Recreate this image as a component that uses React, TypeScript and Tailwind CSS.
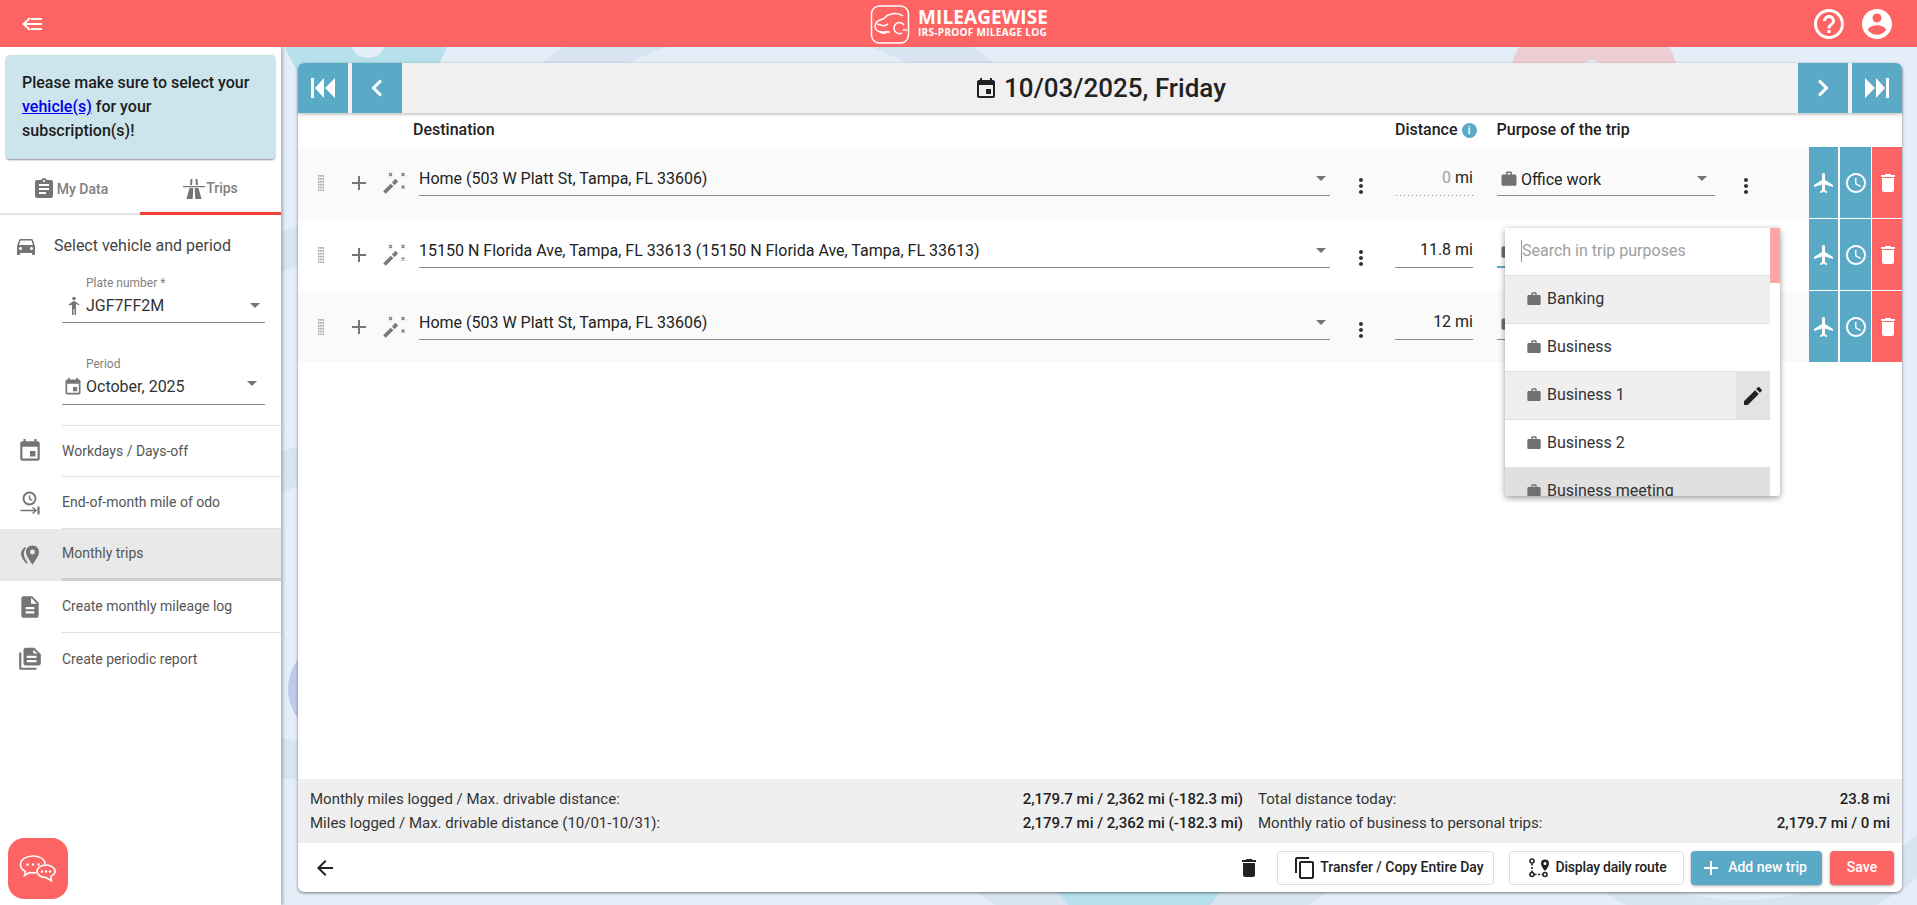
import React from "react";

type IconProps = { d: string; size?: number; className?: string };
const Icon = ({ d, size = 24, className = "" }: IconProps) => (
  <svg width={size} height={size} viewBox="0 0 24 24" fill="currentColor" className={`shrink-0 ${className}`}>
    <path d={d} />
  </svg>
);

const P = {
  event: "M17 12h-5v5h5v-5zM16 1v2H8V1H6v2H5c-1.11 0-1.99.9-1.99 2L3 19c0 1.1.89 2 2 2h14c1.1 0 2-.9 2-2V5c0-1.1-.9-2-2-2h-1V1h-2zm3 18H5V8h14v11z",
  work: "M20 6h-4V4c0-1.11-.89-2-2-2h-4c-1.11 0-2 .89-2 2v2H4c-1.11 0-1.99.89-1.99 2L2 19c0 1.11.89 2 2 2h16c1.11 0 2-.89 2-2V8c0-1.11-.89-2-2-2zm-6 0h-4V4h4v2z",
  assignment: "M19 3h-4.18C14.4 1.84 13.3 1 12 1c-1.3 0-2.4.84-2.82 2H5c-1.1 0-2 .9-2 2v14c0 1.1.9 2 2 2h14c1.1 0 2-.9 2-2V5c0-1.1-.9-2-2-2zm-7 0c.55 0 1 .45 1 1s-.45 1-1 1-1-.45-1-1 .45-1 1-1zm2 14H7v-2h7v2zm3-4H7v-2h10v2zm0-4H7V7h10v2z",
  car: "M18.92 6.01C18.72 5.42 18.16 5 17.5 5h-11c-.66 0-1.21.42-1.42 1.01L3 12v8c0 .55.45 1 1 1h1c.55 0 1-.45 1-1v-1h12v1c0 .55.45 1 1 1h1c.55 0 1-.45 1-1v-8l-2.08-5.99zM6.5 16c-.83 0-1.5-.67-1.5-1.5S5.67 13 6.5 13s1.5.67 1.5 1.5S7.33 16 6.5 16zm11 0c-.83 0-1.5-.67-1.5-1.5s.67-1.5 1.5-1.5 1.5.67 1.5 1.5-.67 1.5-1.5 1.5zM5 11l1.5-4.5h11L19 11H5z",
  add: "M19 13h-6v6h-2v-6H5v-2h6V5h2v6h6v2z",
  more: "M12 8c1.1 0 2-.9 2-2s-.9-2-2-2-2 .9-2 2 .9 2 2 2zm0 2c-1.1 0-2 .9-2 2s.9 2 2 2 2-.9 2-2-.9-2-2-2zm0 6c-1.1 0-2 .9-2 2s.9 2 2 2 2-.9 2-2-.9-2-2-2z",
  flight: "M21 16v-2l-8-5V3.5c0-.83-.67-1.5-1.5-1.5S10 2.67 10 3.5V9l-8 5v2l8-2.5V19l-2 1.5V22l3.5-1 3.5 1v-1.5L13 19v-5.5l8 2.5z",
  time: "M11.99 2C6.47 2 2 6.48 2 12s4.47 10 9.99 10C17.52 22 22 17.52 22 12S17.52 2 11.99 2zM12 20c-4.42 0-8-3.58-8-8s3.58-8 8-8 8 3.58 8 8-3.58 8-8 8zm.5-13H11v6l5.25 3.15.75-1.23-4.5-2.67z",
  del: "M6 19c0 1.1.9 2 2 2h8c1.1 0 2-.9 2-2V7H6v12zM19 4h-3.5l-1-1h-5l-1 1H5v2h14V4z",
  edit: "M3 17.25V21h3.75L17.81 9.94l-3.75-3.75L3 17.25zM20.71 7.04c.39-.39.39-1.02 0-1.41l-2.34-2.34c-.39-.39-1.02-.39-1.41 0l-1.83 1.83 3.75 3.75 1.83-1.83z",
  back: "M20 11H7.83l5.59-5.59L12 4l-8 8 8 8 1.41-1.41L7.83 13H20v-2z",
  copy: "M16 1H4c-1.1 0-2 .9-2 2v14h2V3h12V1zm3 4H8c-1.1 0-2 .9-2 2v14c0 1.1.9 2 2 2h11c1.1 0 2-.9 2-2V7c0-1.1-.9-2-2-2zm0 16H8V7h11v14z",
  doc: "M14 2H6c-1.1 0-1.99.9-1.99 2L4 20c0 1.1.89 2 1.99 2H18c1.1 0 2-.9 2-2V8l-6-6zm2 16H8v-2h8v2zm0-4H8v-2h8v2zm-3-5V3.5L18.5 9H13z",
  account: "M12 2C6.48 2 2 6.48 2 12s4.48 10 10 10 10-4.48 10-10S17.52 2 12 2zm0 3c1.66 0 3 1.34 3 3s-1.34 3-3 3-3-1.34-3-3 1.34-3 3-3zm0 14.2c-2.5 0-4.71-1.28-6-3.22.03-1.99 4-3.08 6-3.08 1.99 0 5.97 1.09 6 3.08-1.29 1.94-3.5 3.22-6 3.22z",
  help: "M11 18h2v-2h-2v2zm1-16C6.48 2 2 6.48 2 12s4.48 10 10 10 10-4.48 10-10S17.52 2 12 2zm0 18c-4.41 0-8-3.59-8-8s3.59-8 8-8 8 3.59 8 8-3.59 8-8 8zm0-14c-2.21 0-4 1.79-4 4h2c0-1.1.9-2 2-2s2 .9 2 2c0 2-3 1.75-3 5h2c0-2.25 3-2.5 3-5 0-2.21-1.79-4-4-4z",
};

const Caret = () => (
  <svg width="10" height="5" viewBox="0 0 10 5" className="shrink-0 text-[#757575]" fill="currentColor">
    <path d="M0 0h10L5 5z" />
  </svg>
);

const Wand = () => (
  <svg width="24" height="24" viewBox="0 0 24 24" className="text-[#7a7a7a]" fill="none" stroke="currentColor">
    <path d="M2.500 21.500 L10 14" strokeWidth="3.800" />
    <path d="M11.200 12.800 L14.800 9.200" strokeWidth="3.800" />
    <path d="M7 2l3 3M10 2L7 5M19.500 2l3 3M22.500 2l-3 3M19.500 14.500l3 3M22.500 14.500l-3 3" strokeWidth="1.100" />
  </svg>
);

const Drag = () => (
  <svg width="6" height="16" viewBox="0 0 6 16" fill="#a0a0a0">
    {[0, 1, 2, 3, 4, 5].flatMap((r) =>
      [0, 1, 2].map((c) => <rect key={`${r}-${c}`} x={c * 2.25} y={r * 2.9} width="1.500" height="1.800" />)
    )}
  </svg>
);

const RowIcons = ({ last }: { last?: boolean }) => (
  <div className={`ml-auto flex h-full gap-[2px] text-white ${last ? "" : "border-b border-white"}`}>
    <div className="flex w-[29px] items-center justify-center bg-[#5aa9c6]"><Icon d={P.flight} size={24} /></div>
    <div className="flex w-[31px] items-center justify-center bg-[#5aa9c6]"><Icon d={P.time} size={24} /></div>
    <div className="-ml-px flex w-[30px] items-center justify-center bg-[#ff6464] pl-px"><Icon d={P.del} size={24} /></div>
  </div>
);

type Trip = { dest: string; dist: string; bg: string; h: string; auto?: boolean; focus?: boolean; purpose?: string; last?: boolean };
const trips: Trip[] = [
  { dest: "Home (503 W Platt St, Tampa, FL 33606)", dist: "0", bg: "bg-[#fafafa]", h: "h-[72px]", auto: true, purpose: "Office work" },
  { dest: "15150 N Florida Ave, Tampa, FL 33613 (15150 N Florida Ave, Tampa, FL 33613)", dist: "11.8", bg: "bg-white", h: "h-[72px]", focus: true },
  { dest: "Home (503 W Platt St, Tampa, FL 33606)", dist: "12", bg: "bg-[#fafafa]", h: "h-[71px]", last: true },
];

const TripRow = ({ t }: { t: Trip }) => (
  <div className={`flex ${t.h} ${t.bg}`}>
    <div className="flex w-[49px] items-center justify-center pr-[4px]"><Drag /></div>
    <div className="flex w-[24px] items-center justify-center text-[#757575]"><Icon d={P.add} size={24} /></div>
    <div className="flex w-[48px] items-center justify-center pr-[2px]"><Wand /></div>
    <div className="mt-[17px] flex h-[32px] w-[911px] items-start justify-between border-b border-[#8a8a8a] pr-[3px]">
      <span className="text-[16px] leading-[29px] text-[#222]">{t.dest}</span>
      <span className="mt-[12px] mr-[1px]"><Caret /></span>
    </div>
    <div className="flex w-[62px] items-center justify-center pt-[6px] text-[#333]"><Icon d={P.more} size={24} /></div>
    <div className={`mt-[17px] ml-[3px] h-[32px] w-[78px] text-right text-[16px] leading-[28px] text-[#222] ${t.auto ? "bg-[linear-gradient(to_right,#8a8a8a_1px,transparent_1px)] bg-[length:4px_1px] bg-bottom bg-repeat-x" : "border-b border-[#8a8a8a]"}`}>
      <span className={t.auto ? "text-[#a0a0a0]" : ""}>{t.dist}</span> mi
    </div>
    <div className={`mt-[17px] ml-[24px] flex h-[32px] w-[218px] items-start gap-[3px] pt-[6px] pr-[4px] pl-[3px] ${t.focus ? "border-b-2 border-[#5aa9c6]" : "border-b border-[#8a8a8a]"}`}>
      <Icon d={P.work} size={18} className="text-[#707070]" />
      <span className="flex-1 text-[16px] leading-[19px] text-[#222]">{t.purpose}</span>
      <span className="mt-[6px] mr-[4px]"><Caret /></span>
    </div>
    <div className="flex w-[62px] items-center justify-center pt-[6px] text-[#333]"><Icon d={P.more} size={24} /></div>
    <RowIcons last={t.last} />
  </div>
);

const purposes = [
  { n: "Banking", c: "bg-[#efefef]" },
  { n: "Business", c: "bg-white" },
  { n: "Business 1", c: "bg-[#efefef]", edit: true },
  { n: "Business 2", c: "bg-white" },
  { n: "Business meeting", c: "bg-[#e0e0e0]" },
];

const Dropdown = () => (
  <div className="absolute top-[165px] left-[1207px] z-20 flex h-[268px] w-[275px] overflow-hidden rounded-b-[3px] bg-white shadow-[0_2px_6px_rgba(0,0,0,0.4)]">
    <div className="flex-1">
      <div className="flex h-[48px] items-center border-b border-[#e0e0e0] pb-[1px] pl-[16px]">
        <span className="h-[22px] w-px bg-[#5aa9c6]" />
        <span className="text-[16px] text-[#a0a0a0]">Search in trip purposes</span>
      </div>
      {purposes.map((p) => (
        <div key={p.n} className={`relative flex h-[48px] items-center border-b border-[#e0e0e0] pb-[1px] pl-[21px] ${p.c}`}>
          <Icon d={P.work} size={16} className="text-[#707070]" />
          <span className="ml-[5px] text-[16px] text-[#333]">{p.n}</span>
          {p.edit && (
            <div className="absolute top-0 right-0 flex h-[47px] w-[34px] items-center justify-center bg-[#e3e3e3] text-[#222]">
              <Icon d={P.edit} size={24} />
            </div>
          )}
        </div>
      ))}
    </div>
    <div className="w-[10px]"><div className="h-[55px] bg-[#ffa5a5]" /></div>
  </div>
);

const NavIcon = ({ kind }: { kind: string }) => {
  if (kind === "odo")
    return (
      <svg width="24" height="24" viewBox="0 0 24 24" fill="none" stroke="#757575" strokeWidth="1.800">
        <circle cx="11.500" cy="7.500" r="6" />
        <path d="M11.500 4.500V8l2.800 1.300" strokeWidth="1.400" />
        <path d="M2.500 19.500h15M14.500 16.500l3.500 3-3.500 3" strokeWidth="1.500" />
        <path d="M20.500 15.500v8" strokeWidth="2.200" />
      </svg>
    );
  if (kind === "pin")
    return (
      <svg width="24" height="24" viewBox="0 0 24 24" fill="#757575">
        <path d="M14.500 2.500C10.600 2.500 8 5.400 8 9c0 4.800 6.500 12.500 6.500 12.500S21 13.800 21 9c0-3.600-2.600-6.500-6.500-6.500zm0 9a2.500 2.500 0 110-5 2.500 2.500 0 010 5z" />
        <path d="M7 4C5 5.500 3 8 3 10.500c0 3.500 3 7.500 5.500 10.500l1-1.500C7.500 16.500 5.800 13.500 5.800 10.500c0-2 .9-3.800 2.200-5z" />
      </svg>
    );
  if (kind === "books")
    return (
      <svg width="26" height="26" viewBox="0 0 24 24" fill="#757575">
        <path d="M4 6H2v14.500C2 21.300 2.700 22 3.500 22H18v-2H4V6z" />
        <path d="M16 1.500H8c-1.100 0-2 .9-2 2V16c0 1.100.9 2 2 2h12c1.100 0 2-.9 2-2V7.500l-6-6zM18 15H9v-2h9v2zm0-4H9V9h9v2zm-3-4V3.500L19 7h-4z" />
      </svg>
    );
  return <Icon d={kind === "event" ? P.event : P.doc} size={26} className="text-[#757575]" />;
};

const nav = [
  { t: "Workdays / Days-off", k: "event" },
  { t: "End-of-month mile of odo", k: "odo" },
  { t: "Monthly trips", k: "pin", active: true },
  { t: "Create monthly mileage log", k: "doc" },
  { t: "Create periodic report", k: "books" },
];

const Sidebar = () => (
  <aside className="relative z-10 flex w-[281px] shrink-0 flex-col bg-white shadow-[2px_0_3px_rgba(0,0,0,0.25)]">
    <div className="mx-[6px] mt-[8px] h-[104px] rounded-[4px] bg-[#cce4ec] px-[16px] pt-[16px] text-[16px] leading-[24px] font-medium text-[#1d1d1d] shadow-[0_1px_2px_rgba(0,0,0,0.45)]">
      Please make sure to select your <span className="text-[#0000ee] underline">vehicle(s)</span> for your subscription(s)!
    </div>
    <div className="mt-px flex h-[55px] border-b-2 border-[#e4e4e4] text-[14px] font-medium text-[#808080]">
      <div className="flex w-[140px] items-center justify-center gap-[1px] pt-[5px]">
        <Icon d={P.assignment} className="text-[#757575]" />
        My Data
      </div>
      <div className="-mb-[2px] flex w-[141px] items-center justify-center gap-[1px] border-b-[3px] border-[#f44336] pt-[5px]">
        <svg width="22" height="22" viewBox="0 0 22 22" fill="#757575">
          <path d="M7.500 1h2l-.4 6H7.100zM12.500 1h2l.4 6h-2zM0 8h22v1.200H0zM6.500 10h3.800L9.700 21H3.500zM11.700 10h3.800l3 11h-6.200z" />
        </svg>
        Trips
      </div>
    </div>
    <div className="flex h-[60px] items-center pt-[1px] pl-[14px] text-[16px] text-[#444]">
      <Icon d={P.car} className="text-[#757575]" />
      <span className="ml-[16px]">Select vehicle and period</span>
    </div>
    <div className="ml-[62px] w-[203px]">
      <div className="pl-[24px] text-[12px] leading-[16px] text-[#808080]">Plate number *</div>
      <div className="flex h-[32px] items-center border-b border-[#8a8a8a] pr-[5px] pb-[2px] text-[16px] text-[#333]">
        <svg width="24" height="20" viewBox="0 0 24 20" fill="#757575" className="shrink-0">
          <circle cx="12" cy="2.500" r="1.800" />
          <path d="M6.500 8.500 12 4.800l5.500 3.700-.7 1-2.800-1.800V19h-1.500v-6h-1v6H10V8.700L7.200 9.500z" />
        </svg>
        <span className="flex-1">JGF7FF2M</span>
        <Caret />
      </div>
      <div className="mt-[33px] pl-[24px] text-[12px] leading-[16px] text-[#808080]">Period</div>
      <div className="flex h-[33px] items-center border-b border-[#8a8a8a] pr-[8px] pb-[3px] text-[16px] text-[#333]">
        <span className="flex w-[24px] justify-start pl-px"><Icon d={P.event} size={20} className="text-[#757575]" /></span>
        <span className="flex-1">October, 2025</span>
        <span className="-mt-[6px]"><Caret /></span>
      </div>
    </div>
    <div className="mt-[20px]">
      {nav.map((n, i) => (
        <div key={n.t} className={`flex h-[52px] ${n.active ? "bg-[#e9e9e9]" : ""}`}>
          <div className="flex w-[62px] shrink-0 items-center justify-center pr-[2px]"><NavIcon kind={n.k} /></div>
          <div className={`flex flex-1 items-center text-[14px] text-[#555] ${n.active ? "border-b-[3px] border-[#cfcfcf]" : i < 4 ? "border-b border-[#e0e0e0]" : ""} ${i === 0 ? "border-t border-[#e0e0e0]" : ""}`}>
            {n.t}
          </div>
        </div>
      ))}
    </div>
    <div className="absolute top-[791px] left-[8px] flex h-[61px] w-[60px] items-center justify-center rounded-[16px] bg-[#ff6464]">
      <svg width="38" height="30" viewBox="0 0 38 30" fill="none" stroke="white" strokeWidth="1.600">
        <path d="M14 2C7 2 1.500 5.500 1.500 10.500c0 3 2 5.500 5 7l-1 4 5-3c1.200.3 2.400.4 3.700.4 1 0 2-.1 3-.3" />
        <path d="M14 2c6.500 0 11.500 3 12.300 8" />
        <path d="M27 11c-5 0-9 2.700-9 6.300 0 3.600 4 6.200 9 6.200l5.500 3.500-.7-4.600c2.500-1.200 4.200-3 4.200-5.100 0-3.600-4-6.300-9-6.300z" />
        <path d="M8.500 10.500h.1M14 10.500h.1M19.500 10.500h.1M23 17.500h.1M27 17.500h.1M31 17.500h.1" strokeWidth="2.400" strokeLinecap="round" />
      </svg>
    </div>
  </aside>
);

const Background = () => (
  <svg className="absolute inset-0 h-full w-full" viewBox="0 0 1636 858" preserveAspectRatio="none">
    <g transform="translate(-281 -47)">
      <circle cx="768" cy="352" r="344" fill="none" stroke="#d8e5f0" strokeWidth="46" />
      <circle cx="1152" cy="628" r="318" fill="#d8e5f0" />
      <circle cx="1139" cy="840" r="96" fill="#b5e0ec" />
      <circle cx="1751" cy="668" r="268" fill="#d8e5f0" />
      <circle cx="1742" cy="632" r="268" fill="#e3eef8" />
      <circle cx="366" cy="20" r="85" fill="#b5e0ec" />
      <circle cx="368" cy="40" r="18" fill="#e3eef8" />
      <circle cx="1594" cy="89" r="86" fill="#eccdd4" />
      <circle cx="1592" cy="72" r="12" fill="#e3eef8" />
      <circle cx="336" cy="689" r="48" fill="#c0cbec" />
      <path d="M281 232 L298 227 V267 L281 272z" fill="#d8e5f0" />
      <path d="M281 452 L298 446 V486 L281 493z" fill="#d8e5f0" />
      <path d="M281 738 L298 740 V780 L281 778z" fill="#d8e5f0" />
    </g>
  </svg>
);

const TopBar = () => (
  <div className="relative z-10 flex h-[50px] shrink-0 rounded-t-[6px] bg-[#f0f0f0] shadow-[0_2px_3px_rgba(0,0,0,0.2)]">
    <div className="flex h-[50px] w-[50px] items-center justify-center rounded-tl-[6px] bg-[#5aa9c6] text-white">
      <svg width="26" height="24" viewBox="0 0 26 24" fill="white"><path d="M1 2h3v20H1zM14 2v20L5 12zM25 2v20l-10-10z" /></svg>
    </div>
    <div className="ml-[4px] flex h-[50px] w-[50px] items-center justify-center bg-[#5aa9c6]">
      <svg width="24" height="24" viewBox="0 0 24 24" fill="none" stroke="white" strokeWidth="3"><path d="M16 4.500 8.500 12l7.500 7.500" /></svg>
    </div>
    <div className="flex flex-1 items-center justify-center gap-[6px] pt-[1px] text-[26px] font-medium text-[#222]">
      <Icon d={P.event} className="text-[#222]" />
      10/03/2025, Friday
    </div>
    <div className="flex h-[50px] w-[50px] items-center justify-center bg-[#5aa9c6]">
      <svg width="24" height="24" viewBox="0 0 24 24" fill="none" stroke="white" strokeWidth="3"><path d="M8 4.500 15.500 12 8 19.500" /></svg>
    </div>
    <div className="ml-[4px] flex h-[50px] w-[50px] items-center justify-center rounded-tr-[6px] bg-[#5aa9c6]">
      <svg width="26" height="24" viewBox="0 0 26 24" fill="white"><path d="M25 2h-3v20h3zM12 2v20l9-10zM1 2v20l10-10z" /></svg>
    </div>
  </div>
);

const Stat = ({ l, v }: { l: string; v: string }) => (
  <div className="flex h-[24px] items-center justify-between">
    <span className="text-[#333]">{l}</span>
    <span className="font-medium text-[#222]">{v}</span>
  </div>
);

const Card = () => (
  <div className="relative flex h-full flex-col rounded-[6px] bg-white shadow-[0_1px_3px_rgba(0,0,0,0.5)]">
    <TopBar />
    <div className="flex h-[34px] shrink-0 items-center text-[16px] font-medium text-[#222]">
      <span className="ml-[115px] w-[982px]">Destination</span>
      <span>Distance</span>
      <span className="mt-[1px] ml-[4px] flex h-[15px] w-[15px] items-center justify-center rounded-full bg-[#5aa9c6] text-[10px] font-bold text-white">i</span>
      <span className="ml-[20px]">Purpose of the trip</span>
    </div>
    {trips.map((t) => <TripRow key={t.dist} t={t} />)}
    <div className="flex-1" />
    <div className="grid h-[64px] shrink-0 grid-cols-[933px_632px] gap-x-[15px] bg-[#efefef] pt-[8px] pl-[12px] text-[15px]">
      <div>
        <Stat l="Monthly miles logged / Max. drivable distance:" v="2,179.7 mi / 2,362 mi (-182.3 mi)" />
        <Stat l="Miles logged / Max. drivable distance (10/01-10/31):" v="2,179.7 mi / 2,362 mi (-182.3 mi)" />
      </div>
      <div>
        <Stat l="Total distance today:" v="23.8 mi" />
        <Stat l="Monthly ratio of business to personal trips:" v="2,179.7 mi / 0 mi" />
      </div>
    </div>
    <div className="flex h-[49px] shrink-0 items-center pr-[8px] pl-[15px] text-[14px] font-medium">
      <Icon d={P.back} className="text-[#222]" />
      <div className="ml-auto text-[#222]"><Icon d={P.del} /></div>
      <button className="ml-[16px] flex h-[34px] w-[217px] items-center justify-center gap-[3px] rounded-[4px] border border-[#dddddd] bg-white pl-[6px] text-[#222]">
        <Icon d={P.copy} /> Transfer / Copy Entire Day
      </button>
      <button className="ml-[15px] flex h-[34px] w-[175px] items-center justify-center gap-[5px] rounded-[4px] border border-[#dddddd] bg-white tracking-[-0.2px] text-[#222]">
        <svg width="24" height="24" viewBox="0 0 24 24" fill="none" stroke="#222" strokeWidth="1.600">
          <circle cx="5" cy="18.500" r="2" />
          <circle cx="18" cy="18.500" r="2" />
          <circle cx="5" cy="5" r="2" />
          <path d="M5 7.500v8.500M7.500 18.500h8" strokeDasharray="2 1.500" />
          <path d="M18 15s-4-4.500-4-7.500a4 4 0 018 0c0 3-4 7.500-4 7.500z" fill="#222" stroke="none" />
          <circle cx="18" cy="7.500" r="1.500" fill="white" stroke="none" />
        </svg>
        Display daily route
      </button>
      <button className="ml-[7px] flex h-[34px] w-[131px] items-center justify-center gap-[5px] rounded-[4px] bg-[#5aa9c6] pr-[7px] text-white shadow-[0_1px_3px_rgba(0,0,0,0.35)]">
        <Icon d={P.add} /> Add new trip
      </button>
      <button className="ml-[8px] flex h-[34px] w-[64px] items-center justify-center rounded-[4px] bg-[#ff6464] text-white shadow-[0_1px_3px_rgba(0,0,0,0.35)]">
        Save
      </button>
    </div>
    <Dropdown />
  </div>
);

const Header = () => (
  <header className="relative z-20 flex h-[47px] shrink-0 items-center bg-[#ff6464] text-white">
    <div className="flex flex-1 pl-[22px]">
      <svg width="20" height="14" viewBox="0 0 20 14" fill="none" stroke="white" strokeWidth="2">
        <path d="M8 1 1.500 7 8 13M2 7h18M9 2h11M9 12h11" />
      </svg>
    </div>
    <div className="flex w-[177px] items-center">
      <svg width="40" height="40" viewBox="0 0 40 40" fill="none" stroke="white" strokeWidth="1.500" className="shrink-0">
        <rect x="1.500" y="2" width="37" height="37" rx="8" />
        <path d="M5 22c0-4 4-6 8-7l5-4c5-2 11-2 15 1M5 22c0 3 2 5 5 6h10M7 20l7 2 4-2" />
        <path d="M10 27c1 3 6 3 7 0" />
        <path d="M34 21a5.500 5.500 0 10-2 8" />
        <path d="M33 26h4" />
      </svg>
      <div className="ml-[8px] flex flex-col pb-[2px] [font-family:'Open_Sans',sans-serif] font-bold">
        <span className="text-[19px] leading-[20px] tracking-[0.1px] whitespace-nowrap">MILEAGEWISE</span>
        <span className="text-[10px] leading-[11px] tracking-[0.3px] whitespace-nowrap">IRS-PROOF MILEAGE LOG</span>
      </div>
    </div>
    <div className="flex flex-1 justify-end gap-[12px] pr-[22px]">
      <Icon d={P.help} size={36} />
      <Icon d={P.account} size={36} />
    </div>
  </header>
);

export default function App() {
  return (
    <div className="flex h-[905px] w-full flex-col overflow-hidden bg-white [font-family:Roboto,sans-serif]">
      <Header />
      <div className="flex min-h-0 flex-1">
        <Sidebar />
        <main className="relative flex-1 bg-[#e3eef8] pt-[16px] pr-[15px] pb-[13px] pl-[17px]">
          <Background />
          <Card />
        </main>
      </div>
    </div>
  );
}
